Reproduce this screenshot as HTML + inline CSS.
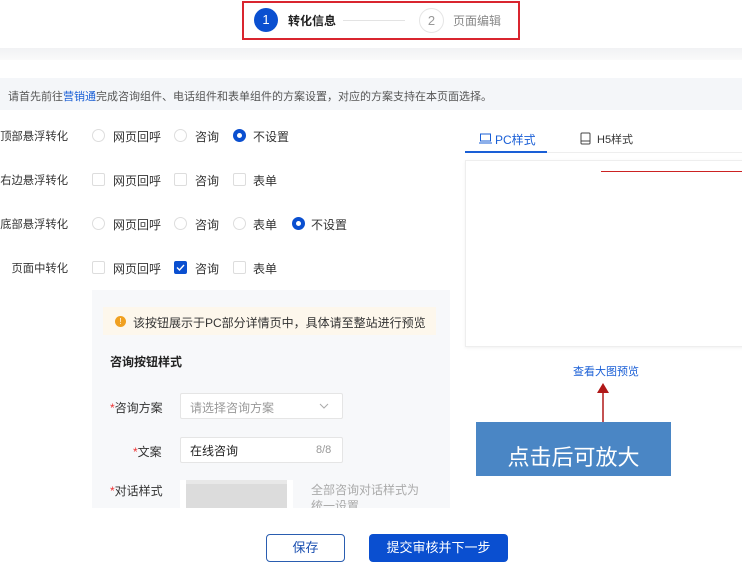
<!DOCTYPE html>
<html><head><meta charset="utf-8"><style>
*{margin:0;padding:0;box-sizing:border-box}
body{width:742px;height:568px;overflow:hidden;background:#fff;position:relative;font-family:"Liberation Sans","Noto Sans CJK SC",sans-serif;font-size:12px;color:#333}
.a{position:absolute;white-space:nowrap}
.rad{position:absolute;width:13px;height:13px;border:1px solid #ddd;border-radius:50%;background:#fff}
.rad.on{border:4px solid #0a4fd0}
.chk{position:absolute;width:13px;height:13px;border:1px solid #ddd;border-radius:2px;background:#fff}
.lbl{position:absolute;right:674px;white-space:nowrap;color:#333;font-size:11.3px}
</style></head><body>
<div class="a" style="left:242px;top:1px;width:278px;height:39px;border:2px solid #d9252f"></div>
<div class="a" style="left:254px;top:8px;width:24px;height:24px;border-radius:50%;background:#0a4fd0;color:#fff;text-align:center;line-height:24px;font-size:13px">1</div>
<div class="a" style="left:288px;top:12px;font-weight:bold;color:#222">转化信息</div>
<div class="a" style="left:343px;top:20px;width:62px;height:1px;background:#e3e3e3"></div>
<div class="a" style="left:419px;top:8px;width:25px;height:25px;border-radius:50%;border:1px solid #e5e5e5;color:#999;text-align:center;line-height:23px;font-size:13px">2</div>
<div class="a" style="left:453px;top:12px;color:#888">页面编辑</div>
<div class="a" style="left:0;top:48px;width:742px;height:12px;background:linear-gradient(#f1f2f4,#fafafa)"></div>
<div class="a" style="left:0;top:78px;width:742px;height:32px;background:#f4f6f9"></div>
<div class="a" style="left:8px;top:88px;font-size:11px;color:#555">请首先前往<span style="color:#1a5fd6">营销通</span>完成咨询组件、电话组件和表单组件的方案设置，对应的方案支持在本页面选择。</div>
<div class="lbl" style="top:128px">顶部悬浮转化</div>
<div class="rad" style="left:92px;top:129px"></div><div class="a" style="left:113px;top:128px">网页回呼</div>
<div class="rad" style="left:174px;top:129px"></div><div class="a" style="left:195px;top:128px">咨询</div>
<div class="rad on" style="left:233px;top:129px"></div><div class="a" style="left:253px;top:128px">不设置</div>

<div class="lbl" style="top:172px">右边悬浮转化</div>
<div class="chk" style="left:92px;top:173px"></div><div class="a" style="left:113px;top:172px">网页回呼</div>
<div class="chk" style="left:174px;top:173px"></div><div class="a" style="left:195px;top:172px">咨询</div>
<div class="chk" style="left:233px;top:173px"></div><div class="a" style="left:253px;top:172px">表单</div>

<div class="lbl" style="top:216px">底部悬浮转化</div>
<div class="rad" style="left:92px;top:217px"></div><div class="a" style="left:113px;top:216px">网页回呼</div>
<div class="rad" style="left:174px;top:217px"></div><div class="a" style="left:195px;top:216px">咨询</div>
<div class="rad" style="left:233px;top:217px"></div><div class="a" style="left:253px;top:216px">表单</div>
<div class="rad on" style="left:292px;top:217px"></div><div class="a" style="left:311px;top:216px">不设置</div>

<div class="lbl" style="top:260px">页面中转化</div>
<div class="chk" style="left:92px;top:261px"></div><div class="a" style="left:113px;top:260px">网页回呼</div>
<div class="chk" style="left:174px;top:261px;background:#0a4fd0;border-color:#0a4fd0"><svg width="11" height="11" style="position:absolute;left:0;top:0"><path d="M2 5.5l2.5 2.5 4.5-5" stroke="#fff" stroke-width="1.4" fill="none"/></svg></div><div class="a" style="left:195px;top:260px">咨询</div>
<div class="chk" style="left:233px;top:261px"></div><div class="a" style="left:253px;top:260px">表单</div>
<div class="a" style="left:92px;top:290px;width:358px;height:218px;background:#f7f8fa"></div>
<div class="a" style="left:103px;top:307px;width:333px;height:28px;background:#fdf7ec"></div>
<div class="a" style="left:115px;top:316px;width:11px;height:11px;border-radius:50%;background:#f0a020;color:#fff;font-size:8px;text-align:center;line-height:11px">!</div>
<div class="a" style="left:133px;top:314px">该按钮展示于PC部分详情页中，具体请至整站进行预览</div>
<div class="a" style="left:110px;top:353px;font-weight:bold;color:#222">咨询按钮样式</div>
<div class="a" style="left:110px;top:399px"><span style="color:#e33">*</span>咨询方案</div>
<div class="a" style="left:180px;top:393px;width:163px;height:26px;background:#fff;border:1px solid #e5e5e5;border-radius:2px"></div>
<div class="a" style="left:190px;top:399px;color:#999">请选择咨询方案</div>
<svg class="a" style="left:319px;top:402px" width="10" height="8"><path d="M1 2l4 4 4-4" stroke="#aaa" fill="none"/></svg>
<div class="a" style="left:133px;top:443px"><span style="color:#e33">*</span>文案</div>
<div class="a" style="left:180px;top:437px;width:163px;height:26px;background:#fff;border:1px solid #e5e5e5;border-radius:2px"></div>
<div class="a" style="left:190px;top:442px;color:#222">在线咨询</div>
<div class="a" style="left:316px;top:444px;font-size:11px;color:#999">8/8</div>
<div class="a" style="left:110px;top:482px"><span style="color:#e33">*</span>对话样式</div>
<div class="a" style="left:180px;top:480px;width:113px;height:28px;background:#fff"></div>
<div class="a" style="left:186px;top:480px;width:101px;height:28px;background:#dcdcdc;border-top:4px solid #e8e8e8"></div>
<div class="a" style="left:311px;top:482px;color:#aaa;line-height:16px">全部咨询对话样式为<br>统一设置</div>
<div class="a" style="left:92px;top:508px;width:358px;height:20px;background:#fff"></div>
<div class="a" style="left:465px;top:152px;width:277px;height:1px;background:#eee"></div>
<div class="a" style="left:465px;top:151px;width:82px;height:2px;background:#1a5fd6"></div>
<svg class="a" style="left:479px;top:133px" width="13" height="11"><rect x="1.5" y="1" width="10" height="7" fill="none" stroke="#1a5fd6"/><path d="M0 10h13" stroke="#1a5fd6"/></svg>
<div class="a" style="left:495px;top:131px;color:#1a5fd6">PC样式</div>
<svg class="a" style="left:580px;top:132px" width="11" height="13"><rect x="1" y="1" width="9" height="11" rx="1" fill="none" stroke="#444"/><path d="M1 9h9" stroke="#444"/></svg>
<div class="a" style="left:597px;top:131px;color:#333;font-size:11px">H5样式</div>
<div class="a" style="left:465px;top:160px;width:290px;height:187px;border:1px solid #eee;box-shadow:0 1px 3px rgba(0,0,0,.06)"></div>
<div class="a" style="left:601px;top:171px;width:141px;height:1px;background:#c22"></div>
<div class="a" style="left:573px;top:363px;font-size:11px;color:#1a5fd6">查看大图预览</div>
<svg class="a" style="left:594px;top:380px" width="18" height="44"><path d="M9 3l6 10H3z" fill="#b01818"/><path d="M9 12v32" stroke="#b01818" stroke-width="1.5"/></svg>
<div class="a" style="left:476px;top:422px;width:195px;height:54px;background:#4a86c5;color:#fff;font-size:22px;text-align:center;padding-top:18px">点击后可放大</div>
<div class="a" style="left:266px;top:534px;width:79px;height:28px;border:1px solid #2a5db0;border-radius:4px;text-align:center;line-height:26px;color:#1a4fb0;font-size:13px">保存</div>
<div class="a" style="left:369px;top:534px;width:139px;height:28px;background:#0a4fd0;border-radius:4px;text-align:center;line-height:28px;color:#fff;font-size:13px">提交审核并下一步</div>
</body></html>
